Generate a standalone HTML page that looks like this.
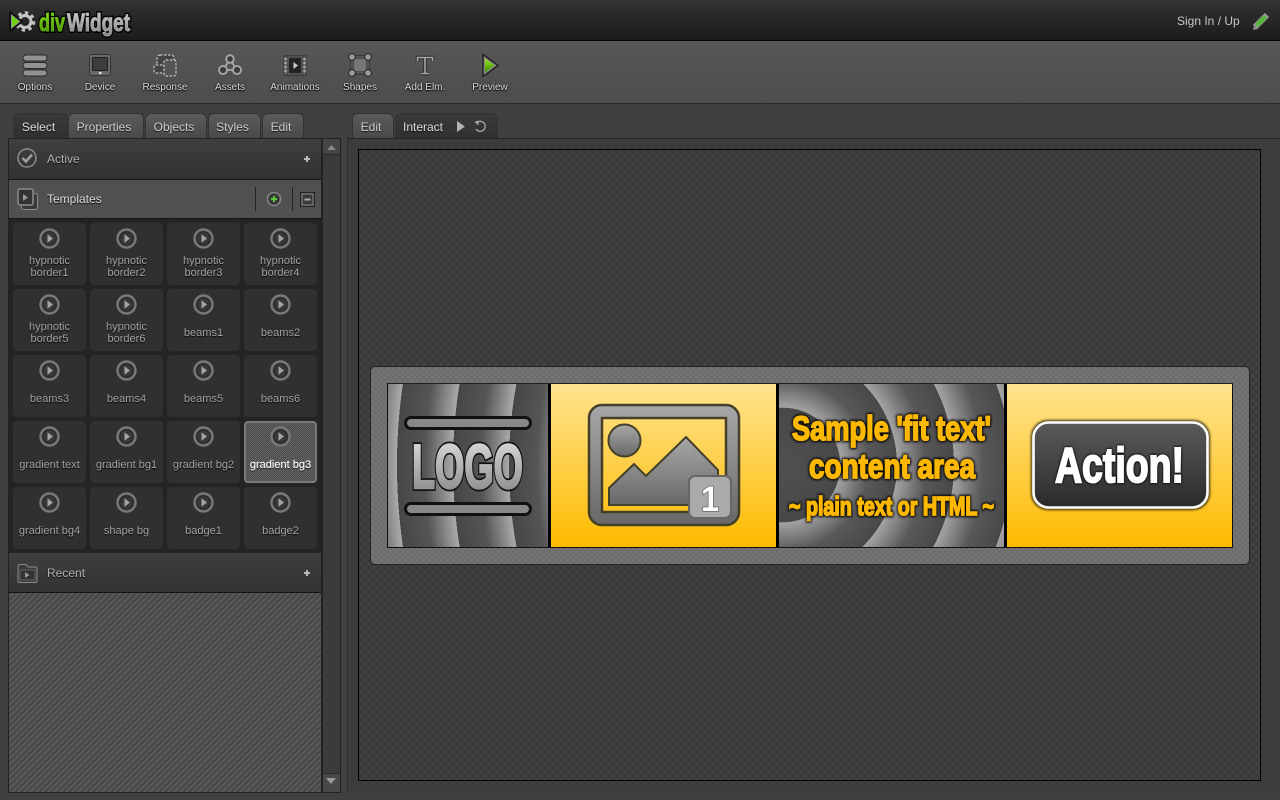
<!DOCTYPE html>
<html><head><meta charset="utf-8"><title>divWidget</title>
<style>
html,body{margin:0;padding:0;width:1280px;height:800px;overflow:hidden;background:#404040;font-family:"Liberation Sans",sans-serif}
div{position:absolute;box-sizing:border-box}
svg{position:absolute;overflow:visible}
.lb{width:70px;text-align:center;font-size:10px;line-height:12px;color:#ddd;text-shadow:0 1px 1px #000,0 0 2px #000;top:82px}
.tab{top:113px;height:25px;border:1px solid #333;border-bottom:0;border-radius:6px 6px 0 0;background:linear-gradient(#5b5b5b,#4a4a4a);color:#d0d0d0;font-size:12px;line-height:27px;text-align:center;padding-right:4px;text-shadow:0 1px 1px #111}
.tab.on{background:linear-gradient(#3a3a3a,#303030);color:#ddd;height:26px}
.hdr{left:9px;width:312px;background:linear-gradient(#3f3f3f,#323232);border-bottom:1px solid #151515}
.hdr span,.ht{position:absolute;left:38px;font-size:12px;color:#b4b4b4;text-shadow:0 1px 1px #000}
.c{width:73px;height:62px;border-radius:4px;background:#303030;color:#a4a4a4;font-size:11px;line-height:12px;text-align:center;padding-top:32px;text-shadow:0 1px 1px #000}
.c.o{padding-top:38px}
.c svg{left:26px;top:5px}
.sel{background:repeating-conic-gradient(#636363 0 25%,#4c4c4c 0 50%) 0 0/2px 2px;border:2px solid #7a7a7a;color:#fff;padding-top:36px;text-shadow:0 1px 1px #000,0 0 1px #fff}
.sel svg{left:24px;top:3px}
.chk{background:repeating-conic-gradient(#414141 0 25%,#393939 0 50%) 0 0/8px 8px}
</style></head><body>
<svg width="0" height="0" style="position:absolute"><defs>
<symbol id="p" viewBox="0 0 21 21"><circle cx="10.5" cy="10.5" r="9" fill="#3a3a3a" stroke="#787878" stroke-width="2.4"/><circle cx="10.5" cy="10.5" r="6.6" fill="#383838" stroke="#262626" stroke-width=".8"/><path d="M8.5 6.3 L14 10.5 8.500 14.700Z" fill="#a4a4a4"/></symbol>
<linearGradient id="g1" x1="0" y1="0" x2="0" y2="1"><stop offset="0" stop-color="#a8a8a8"/><stop offset="1" stop-color="#686868"/></linearGradient>
<linearGradient id="g2" x1="0" y1="0" x2="0" y2="1"><stop offset="0" stop-color="#e2e2e2"/><stop offset="1" stop-color="#808080"/></linearGradient>
<linearGradient id="g3" x1="0" y1="0" x2="0" y2="1"><stop offset="0" stop-color="#5a5a5a"/><stop offset="1" stop-color="#2a2a2a"/></linearGradient>
<linearGradient id="g4" x1="0" y1="0" x2="0" y2="1"><stop offset="0" stop-color="#92e822"/><stop offset="1" stop-color="#3f8a00"/></linearGradient>
<linearGradient id="g5" x1="0" y1="0" x2="0" y2="1"><stop offset="0" stop-color="#ddd"/><stop offset="1" stop-color="#777"/></linearGradient>
<filter id="b" x="-20%" y="-30%" width="140%" height="160%"><feGaussianBlur stdDeviation="1.2"/></filter>
</defs></svg>

<!-- header -->
<div style="left:0;top:0;width:1280px;height:41px;background:linear-gradient(#333,#1b1b1b);border-bottom:1px solid #000"></div>
<svg style="left:0;top:0" width="140" height="40">
<g fill="none" stroke="#000" stroke-width="1"><circle cx="25" cy="21.500" r="6" stroke="#c4c4c4" stroke-width="3"/><circle cx="25" cy="21.500" r="8.500" stroke="#c4c4c4" stroke-width="3.500" stroke-dasharray="3.200 3.400"/></g>
<path d="M10 12 L22 21.500 10 31Z" fill="#999" stroke="#111" stroke-width="2" stroke-linejoin="round"/>
<path d="M12 15.500 L19 21.500 12 27.500Z" fill="#6fd210"/>
<text x="39" y="31" font-family="Liberation Sans" font-weight="bold" font-size="25" textLength="26" lengthAdjust="spacingAndGlyphs" fill="#000" stroke="#000" stroke-width="4">div</text>
<text x="67" y="31" font-family="Liberation Sans" font-weight="bold" font-size="25" textLength="63" lengthAdjust="spacingAndGlyphs" fill="#000" stroke="#000" stroke-width="4">Widget</text>
<text x="39" y="31" font-family="Liberation Sans" font-weight="bold" font-size="25" textLength="26" lengthAdjust="spacingAndGlyphs" fill="url(#g4)" stroke="#5fb010" stroke-width="1">div</text>
<text x="67" y="31" font-family="Liberation Sans" font-weight="bold" font-size="25" textLength="63" lengthAdjust="spacingAndGlyphs" fill="url(#g5)" stroke="#aaa" stroke-width="1">Widget</text>
</svg>
<div style="left:1177px;top:14px;font-size:12px;line-height:15px;color:#c8c8c8;white-space:nowrap">Sign In / Up</div>
<svg style="left:1250px;top:10px" width="21" height="21" fill="none"><path d="M5 17 L17 5" stroke="#999" stroke-width="6"/><path d="M6.500 15.500 L15.500 6.500" stroke="#5bb53a" stroke-width="4.600"/><path d="M3 20 L4 15 L8 19Z" fill="#888"/></svg>

<!-- toolbar -->
<div style="left:0;top:41px;width:1280px;height:63px;background:linear-gradient(#575757,#4d4d4d);border-bottom:1px solid #2a2a2a"></div>
<svg style="left:0;top:41px" width="520" height="50" fill="none" stroke="#2a2a2a">
<g fill="#929292"><rect x="23" y="14" width="24" height="6" rx="3"/><rect x="23" y="21.500" width="24" height="6" rx="3"/><rect x="23" y="29" width="24" height="6" rx="3"/></g>
<rect x="89.500" y="13.500" width="21" height="21" rx="2" fill="#6a6a6a" stroke="#333"/><rect x="92.500" y="16.500" width="15" height="13" fill="#3c3c3c" stroke="#222"/><rect x="99" y="31" width="2.500" height="2" fill="#ddd" stroke="none"/>
<g stroke="#c4c4c4" stroke-dasharray="2.500 1.500" stroke-width="1.200"><rect x="157" y="14" width="17" height="15" rx="3" fill="#444"/><rect x="154" y="24" width="12" height="8" rx="2" fill="#444"/><rect x="164" y="19" width="12" height="16" rx="2" fill="#555"/></g>
<g stroke="#aaa" stroke-width="1.800"><path d="M230 19 L224 27 M230 19 L236 27 M224 29 H236"/><circle cx="230" cy="18" r="3.800" fill="#3c3c3c"/><circle cx="223" cy="29" r="4" fill="#3c3c3c"/><circle cx="237" cy="29" r="4" fill="#3c3c3c"/></g>
<rect x="284" y="15" width="22" height="19" fill="#777"/><rect x="289" y="17" width="12" height="15" fill="#222"/><path d="M284 15V34M287 15V34M303 15V34M306 15V34" stroke="#333" stroke-width="1"/><path d="M284 18h3M284 22h3M284 26h3M284 30h3M303 18h3M303 22h3M303 26h3M303 30h3" stroke="#ccc" stroke-width="1"/><path d="M293.500 21 L298 24.500 293.500 28Z" fill="#ccc" stroke="none"/>
<rect x="352" y="16" width="16" height="16" fill="#777" stroke="#222" stroke-width="3"/><rect x="352" y="16" width="16" height="16" fill="none" stroke="#888" stroke-width="1"/><g fill="#999" stroke="#222"><circle cx="352" cy="16" r="3.400"/><circle cx="368" cy="16" r="3.400"/><circle cx="352" cy="32" r="3.400"/><circle cx="368" cy="32" r="3.400"/></g>
<path d="M417.500 20 V16.500 H432.500 V20 M425 16.500 V32.500 M421 32.500 H429" stroke="#2a2a2a" stroke-width="3.500"/><path d="M417.500 20 V16.500 H432.500 V20 M425 16.500 V32.500 M421 32.500 H429" stroke="#a8a8a8" stroke-width="1.600"/>
<path d="M483 13.500 L498 24.500 483 35.500Z" fill="#8a8a8a" stroke="#222" stroke-width="1.500" stroke-linejoin="round"/><path d="M485 17.500 L494.500 24.500 485 31.500Z" fill="url(#g4)"  stroke="none"/>
</svg>
<div class="lb" style="left:0">Options</div><div class="lb" style="left:65px">Device</div><div class="lb" style="left:130px">Response</div><div class="lb" style="left:195px">Assets</div><div class="lb" style="left:260px">Animations</div><div class="lb" style="left:325px">Shapes</div><div class="lb" style="left:390px">Add Elm.</div><div class="lb" style="left:455px">Preview</div>

<!-- tabs -->
<div class="tab on" style="left:13px;width:55px">Select</div><div class="tab" style="left:68px;width:76px">Properties</div><div class="tab" style="left:145px;width:62px">Objects</div><div class="tab" style="left:208px;width:53px">Styles</div><div class="tab" style="left:262px;width:42px">Edit</div>
<div class="tab" style="left:352px;width:42px">Edit</div><div class="tab on" style="left:395px;width:103px;text-align:left;padding-left:7px">Interact</div>
<svg style="left:455px;top:119px" width="34" height="16" fill="none"><path d="M2 2 L10 7.500 2 13Z" fill="#b4b4b4"/><path d="M22 3.500 A5 5 0 1 1 21 10" stroke="#aaa" stroke-width="1.300"/><path d="M19.500 3 L23.500 1.500 23.500 6.500Z" fill="#aaa"/></svg>

<!-- left panel -->
<div style="left:8px;top:138px;width:314px;height:655px;background:#242424;border:1px solid #222"></div>
<div class="hdr" style="top:139px;height:41px"><span style="top:13px">Active</span></div>
<svg style="left:17px;top:148px" width="20" height="20" fill="none"><circle cx="10" cy="10" r="9" stroke="#8c8c8c" stroke-width="1.500"/><path d="M5.500 10 L9 13.500 15 6.500" stroke="#a0a0a0" stroke-width="2.500"/></svg>
<svg style="left:303px;top:155px" width="8" height="8"><path d="M4 1V7M1 4H7" stroke="#bbb" stroke-width="2"/></svg>
<div style="left:9px;top:180px;width:312px;height:39px;background:repeating-conic-gradient(#595959 0 25%,#484848 0 50%) 0 0/2px 2px;border-bottom:1px solid #151515"><span class="ht" style="top:12px;color:#ddd">Templates</span></div>
<svg style="left:17px;top:188px" width="23" height="24" fill="none" stroke="#8c8c8c"><rect x="4.500" y="5.500" width="16" height="16" rx="2" fill="#3a3a3a"/><rect x="1" y="1" width="15" height="16" rx="2" fill="#333" stroke-width="1.500"/><path d="M6 6 L11 9.500 6 13Z" fill="#999" stroke="none"/></svg>
<svg style="left:255px;top:186px" width="62" height="26" fill="none"><path d="M.5 1V25M37.500 1V25" stroke="#222"/><circle cx="19" cy="13" r="6.500" fill="#3a3a3a" stroke="#888" stroke-width="1.500"/><path d="M19 10V16M16 13H22" stroke="#5bc83a" stroke-width="2"/><rect x="45.500" y="6.500" width="14" height="14" fill="#444" stroke="#222"/><rect x="47" y="8" width="11" height="11" stroke="#888" fill="#3a3a3a"/><path d="M49.500 13.500H55.500" stroke="#aaa" stroke-width="2"/></svg>

<div class="c" style="left:13px;top:223px"><svg width="21" height="21"><use href="#p"/></svg>hypnotic<br>border1</div>
<div class="c" style="left:90px;top:223px"><svg width="21" height="21"><use href="#p"/></svg>hypnotic<br>border2</div>
<div class="c" style="left:167px;top:223px"><svg width="21" height="21"><use href="#p"/></svg>hypnotic<br>border3</div>
<div class="c" style="left:244px;top:223px"><svg width="21" height="21"><use href="#p"/></svg>hypnotic<br>border4</div>
<div class="c" style="left:13px;top:289px"><svg width="21" height="21"><use href="#p"/></svg>hypnotic<br>border5</div>
<div class="c" style="left:90px;top:289px"><svg width="21" height="21"><use href="#p"/></svg>hypnotic<br>border6</div>
<div class="c o" style="left:167px;top:289px"><svg width="21" height="21"><use href="#p"/></svg>beams1</div>
<div class="c o" style="left:244px;top:289px"><svg width="21" height="21"><use href="#p"/></svg>beams2</div>
<div class="c o" style="left:13px;top:355px"><svg width="21" height="21"><use href="#p"/></svg>beams3</div>
<div class="c o" style="left:90px;top:355px"><svg width="21" height="21"><use href="#p"/></svg>beams4</div>
<div class="c o" style="left:167px;top:355px"><svg width="21" height="21"><use href="#p"/></svg>beams5</div>
<div class="c o" style="left:244px;top:355px"><svg width="21" height="21"><use href="#p"/></svg>beams6</div>
<div class="c o" style="left:13px;top:421px"><svg width="21" height="21"><use href="#p"/></svg>gradient text</div>
<div class="c o" style="left:90px;top:421px"><svg width="21" height="21"><use href="#p"/></svg>gradient bg1</div>
<div class="c o" style="left:167px;top:421px"><svg width="21" height="21"><use href="#p"/></svg>gradient bg2</div>
<div class="c sel" style="left:244px;top:421px"><svg width="21" height="21"><use href="#p"/></svg>gradient bg3</div>
<div class="c o" style="left:13px;top:487px"><svg width="21" height="21"><use href="#p"/></svg>gradient bg4</div>
<div class="c o" style="left:90px;top:487px"><svg width="21" height="21"><use href="#p"/></svg>shape bg</div>
<div class="c o" style="left:167px;top:487px"><svg width="21" height="21"><use href="#p"/></svg>badge1</div>
<div class="c o" style="left:244px;top:487px"><svg width="21" height="21"><use href="#p"/></svg>badge2</div>

<div class="hdr" style="top:553px;height:40px;border-top:1px solid #3f3f3f"><span style="top:12px">Recent</span></div>
<svg style="left:17px;top:563px" width="21" height="21" fill="none" stroke="#8c8c8c"><path d="M1 3.500 Q1 1.500 3 1.500 H9 L11 4 H19 Q20 4 20 5.500 V18 Q20 19.500 18.500 19.500 H2.500 Q1 19.500 1 18Z" fill="#3a3a3a"/><rect x="3" y="7" width="15" height="10" fill="#333" stroke="#666"/><path d="M8 9 L12.500 12 8 15Z" fill="#999" stroke="none"/></svg>
<svg style="left:303px;top:569px" width="8" height="8"><path d="M4 1V7M1 4H7" stroke="#bbb" stroke-width="2"/></svg>
<div style="left:9px;top:593px;width:312px;height:199px;background:linear-gradient(135deg,#484848 25%,#585858 25%,#585858 50%,#484848 50%,#484848 75%,#585858 75%) 0 0/6px 6px"></div>

<!-- scrollbar -->
<div style="left:322px;top:138px;width:19px;height:655px;background:#3b3b3b;border:1px solid #222"></div>
<div style="left:323px;top:139px;width:17px;height:16px;background:#454545;border-bottom:1px solid #2a2a2a"></div>
<div style="left:323px;top:773px;width:17px;height:19px;background:#484848;border-top:1px solid #2a2a2a"></div>
<svg style="left:323px;top:139px" width="17" height="654"><path d="M4 11 L8.500 6 13 11Z" fill="#888"/><path d="M3 639 L13 639 8 645Z" fill="#999"/></svg>

<!-- right panel -->
<div style="left:347px;top:138px;width:933px;height:655px;background:#3c3c3c;border-top:1px solid #242424;border-left:1px solid #2e2e2e"></div>
<div class="chk" style="left:358px;top:149px;width:903px;height:632px;border:1px solid #000"></div>

<!-- banner -->
<div style="left:370px;top:366px;width:880px;height:199px;border:1px solid #222;border-radius:5px;background:repeating-conic-gradient(#747474 0 25%,#6c6c6c 0 50%) 0 0/6px 6px"></div>
<div style="left:387px;top:383px;width:846px;height:165px;background:#000;border:1px solid #111;border-top-color:#222"></div>
<div style="left:388px;top:384px;width:160px;height:163px;background:repeating-radial-gradient(circle at 569px 81px,#aaa 0,#555 28px,#464646 56px)"></div>
<div style="left:551px;top:384px;width:225px;height:163px;background:linear-gradient(#ffe38f,#ffbb00)"></div>
<div style="left:779px;top:384px;width:225px;height:163px;background:radial-gradient(circle at 4px 81px,#505050 0,#484848 57px,transparent 57.5px),repeating-radial-gradient(circle at 4px 81px,#a4a4a4 0,#585858 29px,#484848 57px)"></div>
<div style="left:1007px;top:384px;width:225px;height:163px;background:linear-gradient(#ffe38f,#ffbb00)"></div>

<svg style="left:0;top:0" width="1280" height="800" font-family="Liberation Sans" font-weight="bold">
<!-- logo cell -->
<rect x="405.500" y="417.500" width="125" height="11" rx="5.500" fill="#888" stroke="#111" stroke-width="3"/>
<rect x="405.500" y="503.500" width="125" height="11" rx="5.500" fill="#888" stroke="#111" stroke-width="3"/>
<text x="412" y="488" font-size="62" textLength="111" lengthAdjust="spacingAndGlyphs" fill="#111" stroke="#111" stroke-width="6">LOGO</text>
<text x="412" y="488" font-size="62" textLength="111" lengthAdjust="spacingAndGlyphs" fill="url(#g2)" stroke="url(#g2)" stroke-width="2.500">LOGO</text>
<!-- image icon -->
<path fill-rule="evenodd" d="M602 405 H726 A13 13 0 0 1 739 418 V512 A13 13 0 0 1 726 525 H602 A13 13 0 0 1 589 512 V418 A13 13 0 0 1 602 405Z M602 418 V512 H726 V418Z" fill="url(#g1)" stroke="#443f28" stroke-width="2.500"/>
<circle cx="624.500" cy="440.500" r="16" fill="url(#g1)" stroke="#443f28" stroke-width="2"/>
<path d="M609 488 L634 464 646 476 686 437 718 470 718 505 609 505Z" fill="url(#g1)" stroke="#443f28" stroke-width="2"/>
<rect x="689" y="476" width="42" height="42" rx="6" fill="#aaa" stroke="#666" stroke-width="2"/>
<text x="701" y="511" font-size="35" textLength="18" lengthAdjust="spacingAndGlyphs" fill="#fff" stroke="#666" stroke-width="1.500" paint-order="stroke">1</text>
<!-- fit text -->
<g fill="#000" stroke="#000" stroke-width="4" filter="url(#b)">
<text x="792" y="440" font-size="34" textLength="199" lengthAdjust="spacingAndGlyphs">Sample 'fit text'</text>
<text x="809" y="478" font-size="34" textLength="166" lengthAdjust="spacingAndGlyphs">content area</text>
<text x="789" y="515" font-size="26" textLength="205" lengthAdjust="spacingAndGlyphs">~ plain text or HTML ~</text>
</g>
<g fill="#ffb800" stroke="#ffb800" stroke-width="1.700">
<text x="792" y="440" font-size="34" textLength="199" lengthAdjust="spacingAndGlyphs">Sample 'fit text'</text>
<text x="809" y="478" font-size="34" textLength="166" lengthAdjust="spacingAndGlyphs">content area</text>
<text x="789" y="515" font-size="26" textLength="205" lengthAdjust="spacingAndGlyphs">~ plain text or HTML ~</text>
</g>
<!-- action -->
<rect x="1033" y="422" width="175" height="86" rx="15" fill="#000" stroke="#000" stroke-width="4" filter="url(#b)" opacity=".75"/>
<rect x="1033.500" y="422.500" width="174" height="85" rx="15" fill="url(#g3)" stroke="#fff" stroke-width="2.600"/>
<text x="1055" y="482" font-size="49" textLength="129" lengthAdjust="spacingAndGlyphs" fill="#000" stroke="#000" stroke-width="3" filter="url(#b)">Action!</text>
<text x="1055" y="482" font-size="49" textLength="129" lengthAdjust="spacingAndGlyphs" fill="#fff" stroke="#fff" stroke-width="2">Action!</text>
</svg>
</body></html>
